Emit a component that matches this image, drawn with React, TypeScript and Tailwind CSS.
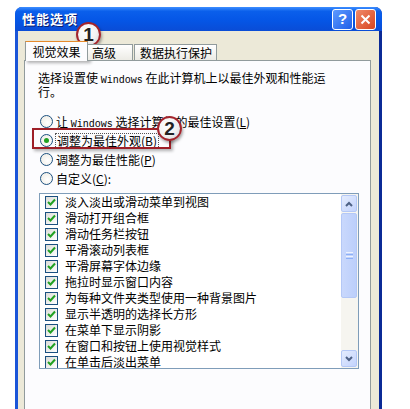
const font = "font-['SimSun','Noto_Sans_CJK_SC',sans-serif]";

const effects = [
  "淡入淡出或滑动菜单到视图",
  "滑动打开组合框",
  "滑动任务栏按钮",
  "平滑滚动列表框",
  "平滑屏幕字体边缘",
  "拖拉时显示窗口内容",
  "为每种文件夹类型使用一种背景图片",
  "显示半透明的选择长方形",
  "在菜单下显示阴影",
  "在窗口和按钮上使用视觉样式",
  "在单击后淡出菜单",
];

// Windows in the old bitmap font is 6px a letter
const Win = () => (
  <span className="align-baseline font-['Liberation_Mono',monospace] text-[10px] leading-none">Windows</span>
);

const Radio = ({ checked }: { checked?: boolean }) => (
  <span className="flex h-[13px] w-[13px] shrink-0 items-center justify-center rounded-full border border-[#1C5180] bg-[radial-gradient(circle_at_60%_60%,#ffffff_0%,#ece9e0_100%)]">
    {checked ? <span className="h-[5px] w-[5px] rounded-full bg-[#21A121]" /> : null}
  </span>
);

const Check = () => (
  <span className="flex h-[13px] w-[13px] shrink-0 items-center justify-center border border-[#1C5180] bg-[linear-gradient(135deg,#dcdcd7_0%,#ffffff_100%)]">
    <svg width="9" height="9" viewBox="0 0 9 9">
      <path d="M1 4 L3.5 6.5 L8 1.5" fill="none" stroke="#21A121" strokeWidth="2" />
    </svg>
  </span>
);

const Marker = ({ n, className }: { n: number; className: string }) => (
  <div
    className={`absolute flex h-[25px] w-[25px] items-center justify-center rounded-full border-2 border-[#A3242C] bg-[radial-gradient(circle_at_40%_35%,#ffffff_0%,#f2f2f2_55%,#c9c9c9_100%)] font-['Liberation_Sans',sans-serif] text-[19px] font-bold leading-none text-[#222] shadow-[1px_2px_3px_rgba(0,0,0,0.35)] ${className}`}
  >
    {n}
  </div>
);

const ScrollButton = ({ up }: { up?: boolean }) => (
  <div className="flex h-[17px] w-[16px] items-center justify-center rounded-[2px] border border-[#B4C8F6] bg-[linear-gradient(135deg,#e4ecfd_0%,#c3d3fd_100%)]">
    <svg width="8" height="6" viewBox="0 0 8 6">
      <path d={up ? "M1 5 L4 2 L7 5" : "M1 1 L4 4 L7 1"} fill="none" stroke="#4D6185" strokeWidth="2" />
    </svg>
  </div>
);

export default function App() {
  return (
    <div className={`relative h-[409px] w-[410px] overflow-hidden bg-white ${font} text-[12px] text-black`}>
      <div className="ml-[15px] mt-[7px] flex h-[420px] w-[367px] flex-col rounded-t-[7px] border-l-[3px] border-r-[3px] border-l-[#1A55D8] border-r-[#0B2A96] bg-[#0A4CD8]">
        {/* title bar */}
        <div className="-mx-[3px] flex h-[24px] items-center rounded-t-[7px] bg-[linear-gradient(180deg,#3D8EFF_0%,#0A5FEB_18%,#0556E6_55%,#0A4CD6_100%)] pl-[7px] pr-[6px]">
          <span className="text-[13px] font-bold tracking-[1px] text-white [text-shadow:1px_1px_0_#0A1E70]">性能选项</span>
          <div className="ml-auto flex gap-[2px]">
            <div className="flex h-[21px] w-[21px] items-center justify-center rounded-[3px] border border-white bg-[linear-gradient(135deg,#5E9BFF_0%,#1F5FE8_100%)] font-['Liberation_Sans',sans-serif] text-[15px] font-bold text-white">
              ?
            </div>
            <div className="flex h-[21px] w-[21px] items-center justify-center rounded-[3px] border border-white bg-[linear-gradient(135deg,#F08A6A_0%,#D8451F_100%)]">
              <svg width="11" height="11" viewBox="0 0 11 11">
                <path d="M1.5 1.5 L9.5 9.5 M9.5 1.5 L1.5 9.5" stroke="white" strokeWidth="2" />
              </svg>
            </div>
          </div>
        </div>

        {/* body */}
        <div className="flex flex-1 flex-col bg-[#ECE9D8] pl-[6px] pr-[8px] pt-[10px]">
          <div className="relative z-10 -mb-px flex items-end pl-[1px]">
            <div className="flex h-[20px] w-[63px] items-center justify-center border border-b-0 border-[#919B9C] border-t-[#E68B2C] bg-[#FCFCFE]">
              视觉效果
            </div>
            <div className="flex h-[17px] w-[45px] items-center border border-l-0 border-[#919B9C] bg-[linear-gradient(180deg,#ffffff_0%,#ecebe5_100%)] pl-[4px]">
              高级
            </div>
            <div className="ml-[1px] flex h-[17px] w-[83px] items-center border border-[#919B9C] bg-[linear-gradient(180deg,#ffffff_0%,#ecebe5_100%)] pl-[5px]">
              数据执行保护
            </div>
          </div>

          <div className="flex flex-1 flex-col border border-[#919B9C] bg-[#FCFCFE] pt-[10px]">
            <div className="ml-[13px] flex flex-col">
              <div className="h-[14px] leading-[14px]">
                选择设置使 <Win /> 在此计算机上以最佳外观和性能运
              </div>
              <div className="h-[14px] leading-[14px]">行。</div>
            </div>

            <div className="ml-[15px] mt-[13px] flex flex-col">
              <div className="flex h-[19px] items-center gap-[3px]">
                <Radio />
                <span>
                  让 <Win /> 选择计算机的最佳设置(<u>L</u>)
                </span>
              </div>
              <div className="flex h-[19px] items-center gap-[2px]">
                <Radio checked />
                <span className="border border-dotted border-[#555] px-px leading-[14px]">
                  调整为最佳外观(<u>B</u>)
                </span>
              </div>
              <div className="flex h-[19px] items-center gap-[3px]">
                <Radio />
                <span>
                  调整为最佳性能(<u>P</u>)
                </span>
              </div>
              <div className="flex h-[19px] items-center gap-[3px]">
                <Radio />
                <span>
                  自定义(<u>C</u>):
                </span>
              </div>
            </div>

            <div className="ml-[14px] mt-[5px] flex h-[176px] w-[320px] border border-[#7F9DB9] bg-white">
              <div className="flex flex-1 flex-col overflow-hidden pl-[5px]">
                {effects.map((e) => (
                  <div key={e} className="flex h-[16px] shrink-0 items-center gap-[7px]">
                    <Check />
                    <span className="leading-[16px]">{e}</span>
                  </div>
                ))}
              </div>
              <div className="flex w-[17px] flex-col bg-[#F6F5F0] py-px pr-px">
                <ScrollButton up />
                <div className="flex flex-1 flex-col pt-[1px]">
                  <div className="flex h-[85px] w-[16px] items-center justify-center rounded-[2px] border border-[#B4C8F6] bg-[linear-gradient(90deg,#c9d8fc_0%,#bccffb_100%)]">
                    <div className="flex flex-col gap-[1px]">
                      <span className="h-px w-[7px] bg-[#EEF3FE]" />
                      <span className="h-px w-[7px] bg-[#8CB0F8]" />
                      <span className="h-px w-[7px] bg-[#EEF3FE]" />
                      <span className="h-px w-[7px] bg-[#8CB0F8]" />
                    </div>
                  </div>
                </div>
                <ScrollButton />
              </div>
            </div>
          </div>
        </div>
      </div>

      {/* annotations */}
      <div className="absolute left-[25px] top-[41px] h-[20px] w-[64px] border-2 border-[#9E1F27] shadow-[2px_2px_3px_rgba(0,0,0,0.3)]" />
      <Marker n={1} className="left-[76px] top-[22px]" />
      <div className="absolute left-[32px] top-[128px] h-[21px] w-[139px] border-2 border-[#9E1F27] shadow-[2px_2px_3px_rgba(0,0,0,0.3)]" />
      <Marker n={2} className="left-[157px] top-[116px]" />
    </div>
  );
}
